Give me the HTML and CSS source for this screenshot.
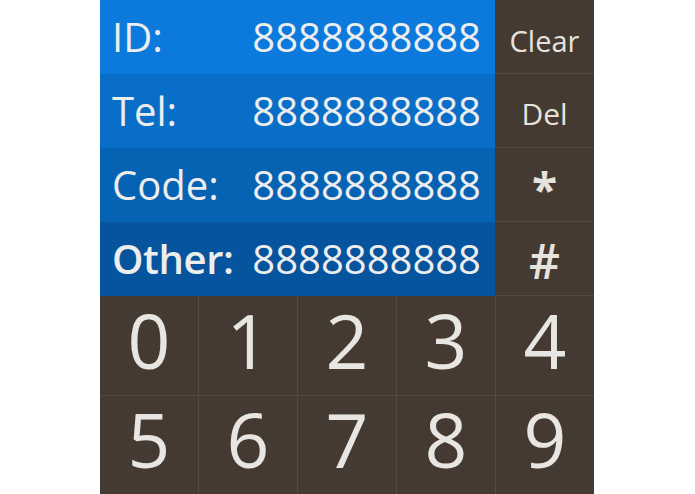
FILE: index.html
```html
<!DOCTYPE html>
<html>
<head>
<meta charset="utf-8">
<link rel="stylesheet" href="styles.css">
</head>
<body>
<div class="panel">
  <div class="top">
    <div class="fields">
      <div class="field f1"><span class="label">ID:</span><span class="value">8888888888</span></div>
      <div class="field f2"><span class="label">Tel:</span><span class="value">8888888888</span></div>
      <div class="field f3"><span class="label">Code:</span><span class="value">8888888888</span></div>
      <div class="field f4"><span class="label bold">Other:</span><span class="value">8888888888</span></div>
    </div>
    <div class="actions">
      <div class="action clear">Clear</div>
      <div class="action del">Del</div>
      <div class="action star">*</div>
      <div class="action hash">#</div>
    </div>
  </div>
  <div class="keys">
    <div class="key">0</div>
    <div class="key">1</div>
    <div class="key">2</div>
    <div class="key">3</div>
    <div class="key">4</div>
    <div class="key">5</div>
    <div class="key">6</div>
    <div class="key">7</div>
    <div class="key">8</div>
    <div class="key">9</div>
  </div>
</div>
</body>
</html>
```
FILE: styles.css
```css
html, body {
  margin: 0;
  padding: 0;
  background: #ffffff;
}
body {
  font-family: "Open Sans", "Noto Sans", sans-serif;
}
.panel {
  width: 494px;
  height: 494px;
  margin: 0 0 0 100px;
  display: flex;
  flex-direction: column;
  background: #554a40;
}
.top {
  display: flex;
  height: 296px;
}
.fields {
  width: 395px;
  display: flex;
  flex-direction: column;
}
.field {
  height: 74px;
  display: flex;
  align-items: center;
  justify-content: space-between;
  padding: 0 14px 0 12px;
  color: #ededed;
  font-size: 40px;
  line-height: 1;
}
.f1 { background: #0b7adc; }
.f2 { background: #086ec8; }
.f3 { background: #0662b3; }
.f4 { background: #05549d; }
.label.bold { font-weight: 600; letter-spacing: -0.4px; }
.actions {
  width: 99px;
  display: flex;
  flex-direction: column;
  background: #453a31;
}
.action {
  border-bottom: 1px solid #554a40;
  display: flex;
  align-items: center;
  justify-content: center;
  color: #e6e3de;
  line-height: 1;
  box-sizing: border-box;
  height: 74px;
}
.clear { font-size: 29px; padding-top: 7px; }
.del { font-size: 30px; padding-top: 6px; }
.star { font-size: 46px; font-weight: 700; padding-top: 8px; }
.hash { font-size: 48px; font-weight: 600; padding-top: 4px; }
.keys {
  flex: 1;
  display: grid;
  grid-template-columns: repeat(5, 1fr);
  grid-template-rows: 1fr 1fr;
  gap: 1px;
  background: #554a40;
}
.key {
  background: #453a31;
  color: #e8e6e2;
  font-size: 75px;
  line-height: 1;
  display: flex;
  align-items: center;
  justify-content: center;
  padding-bottom: 10px;
}
```
